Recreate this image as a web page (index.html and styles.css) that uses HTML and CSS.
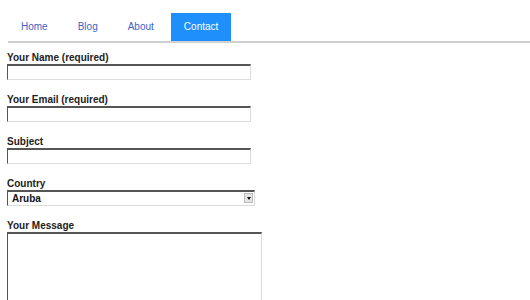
FILE: index.html
```html
<!DOCTYPE html>
<html lang="en">

<head>
  <meta charset="UTF-8">
  <meta name="viewport" content="width=device-width, initial-scale=1.0">
  <title>Contact</title>
  <link rel="stylesheet" href="styles.css">
</head>

<body>
  <ul class="nav">
    <li><a href="#">Home</a></li>
    <li><a href="#">Blog</a></li>
    <li><a href="#">About</a></li>
    <li class="active"><a href="#">Contact</a></li>
  </ul>

  <form class="contact-form">
    <div class="field">
      <label>Your Name (required)</label>
      <input type="text" name="name">
    </div>
    <div class="field">
      <label>Your Email (required)</label>
      <input type="email" name="email">
    </div>
    <div class="field">
      <label>Subject</label>
      <input type="text" name="subject">
    </div>
    <div class="field">
      <label>Country</label>
      <div class="select-box">
        <select name="country">
          <option>Aruba</option>
        </select>
        <span class="select-arrow"></span>
      </div>
    </div>
    <div class="field">
      <label>Your Message</label>
      <textarea name="message"></textarea>
    </div>
  </form>
</body>

</html>
```

FILE: styles.css
```css
body {
  margin: 0;
  background: #fff;
  font-family: "Liberation Sans", Arial, sans-serif;
  overflow: hidden;
}

.nav {
  display: flex;
  list-style: none;
  margin: 0 0 0 8px;
  padding: 13px 0 0 0;
  border-bottom: 2px solid #d0d0d0;
}

.nav li {
  margin-right: 4px;
}

.nav a {
  display: block;
  padding: 0 13px;
  line-height: 28px;
  font-size: 10px;
  color: #3d5fc8;
  text-decoration: none;
}

.nav li.active a {
  background-color: #1e8ffb;
  color: #fff;
}

.contact-form {
  display: flex;
  flex-direction: column;
  padding: 8px 0 0 7px;
}

.field {
  display: flex;
  flex-direction: column;
  align-items: flex-start;
  margin-bottom: 13px;
}

label {
  display: block;
  font-size: 10px;
  font-weight: bold;
  line-height: 13px;
  color: #222;
}

input,
select,
textarea {
  box-sizing: border-box;
  margin: 0;
  border: 1px solid #dcdcdc;
  border-top: 2px solid #555;
  border-left: 1px solid #555;
  background: #fff;
  outline: none;
}

input {
  width: 244px;
  height: 16px;
}

.select-box {
  position: relative;
  width: 248px;
}

select {
  display: block;
  width: 248px;
  height: 16px;
  padding: 0 0 0 4px;
  font-family: "Liberation Sans", Arial, sans-serif;
  font-size: 10px;
  font-weight: bold;
  color: #111;
  appearance: none;
  -webkit-appearance: none;
}

.select-arrow {
  position: absolute;
  right: 2px;
  top: 3px;
  width: 9px;
  height: 10px;
  background: #e4e4e4;
  border: 1px solid #bbb;
  box-sizing: border-box;
}

.select-arrow::after {
  content: "";
  position: absolute;
  left: 2px;
  top: 3px;
  border-left: 2px solid transparent;
  border-right: 2px solid transparent;
  border-top: 3px solid #111;
}

textarea {
  width: 255px;
  height: 120px;
  resize: none;
}
```
